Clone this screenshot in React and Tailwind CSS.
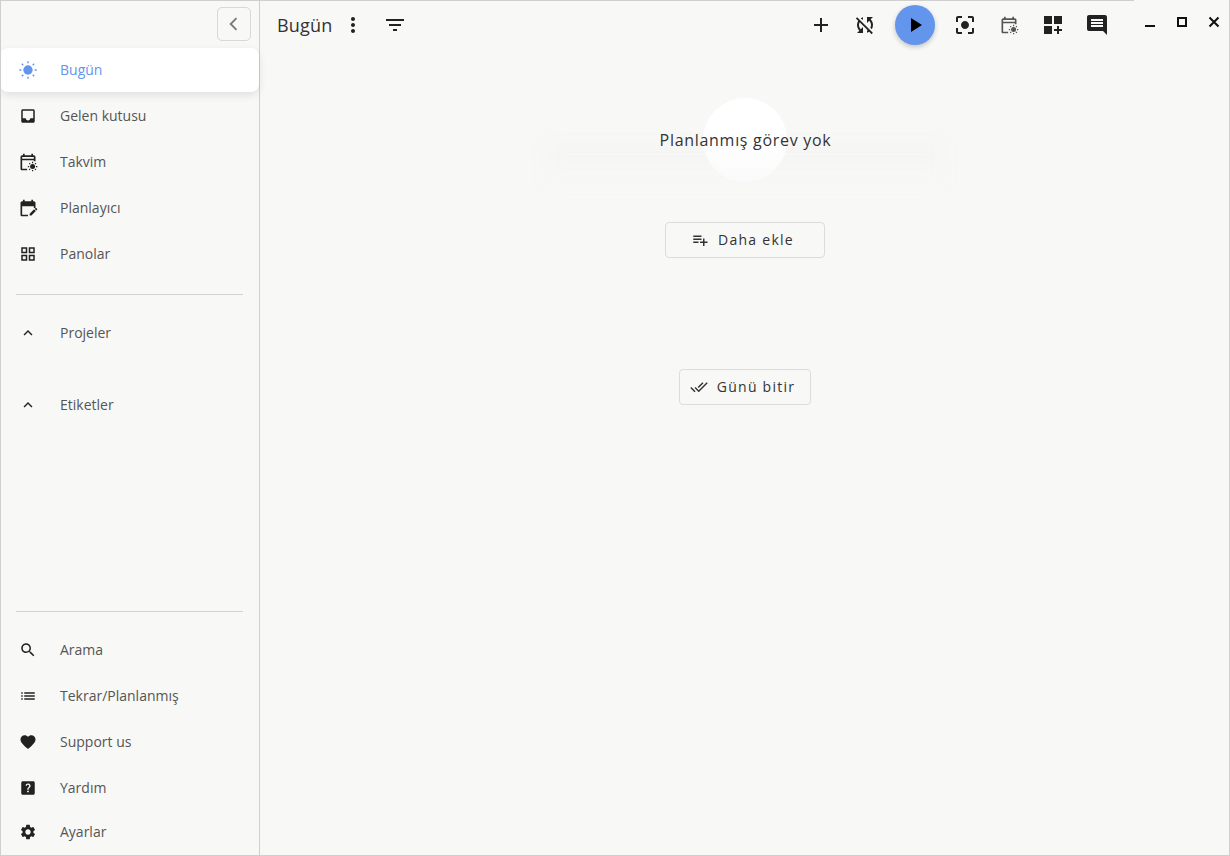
const ICONS = {
  inbox: 'M19 3H4.99c-1.11 0-1.98.89-1.98 2L3 19c0 1.1.88 2 1.99 2H19c1.1 0 2-.9 2-2V5c0-1.11-.9-2-2-2zm0 12h-4c0 1.66-1.35 3-3 3s-3-1.34-3-3H4.99V5H19v10z',
  planner: 'M5 10h14v2h2V6c0-1.1-.9-2-2-2h-1V2h-2v2H8V2H6v2H5c-1.11 0-1.99.9-1.99 2L3 20c0 1.1.89 2 2 2h7v-2H5V10zm17.84 4.28l-.71.71-2.12-2.12.71-.71c.39-.39 1.02-.39 1.41 0l.71.71c.39.39.39 1.02 0 1.41zm-3.54-.7l2.12 2.12L16.12 21H14v-2.12l5.3-5.3z',
  grid: 'M3 3v8h8V3H3zm6 6H5V5h4v4zm-6 4v8h8v-8H3zm6 6H5v-4h4v4zm4-16v8h8V3h-8zm6 6h-4V5h4v4zm-6 4v8h8v-8h-8zm6 6h-4v-4h4v4z',
  expand: 'M12 8l-6 6 1.41 1.41L12 10.83l4.59 4.58L18 14z',
  search: 'M15.5 14h-.79l-.28-.27C15.41 12.59 16 11.11 16 9.5 16 5.91 13.09 3 9.5 3S3 5.91 3 9.5 5.91 16 9.5 16c1.61 0 3.09-.59 4.23-1.57l.27.28v.79l5 4.99L20.49 19l-4.99-5zm-6 0C7.01 14 5 11.99 5 9.5S7.01 5 9.5 5 14 7.01 14 9.5 11.99 14 9.5 14z',
  list: 'M3 13h2v-2H3v2zm0 4h2v-2H3v2zm0-8h2V7H3v2zm4 4h14v-2H7v2zm0 4h14v-2H7v2zM7 7v2h14V7H7z',
  heart: 'M12 21.35l-1.45-1.32C5.4 15.36 2 12.28 2 8.5 2 5.42 4.42 3 7.5 3c1.74 0 3.41.81 4.5 2.09C13.09 3.81 14.76 3 16.5 3 19.58 3 22 5.42 22 8.5c0 3.78-3.4 6.86-8.55 11.54L12 21.35z',
  help: 'M19 3H5c-1.1 0-2 .9-2 2v14c0 1.1.9 2 2 2h14c1.1 0 2-.9 2-2V5c0-1.1-.9-2-2-2zm-6.99 15c-.7 0-1.26-.56-1.26-1.26 0-.71.56-1.25 1.26-1.25.71 0 1.25.54 1.25 1.25-.01.69-.54 1.26-1.25 1.26zm3.01-7.4c-.76 1.11-1.48 1.46-1.87 2.17-.16.29-.22.48-.22 1.41h-1.82c0-.49-.08-1.29.31-1.98.49-.87 1.42-1.39 1.96-2.16.57-.81.25-2.33-1.37-2.33-1.06 0-1.58.8-1.8 1.48l-1.65-.7C9.01 7.15 10.22 6 11.99 6c1.48 0 2.49.67 3.01 1.52.44.72.7 2.07.03 3.08z',
  settings: 'M19.14 12.94c.04-.3.06-.61.06-.94 0-.32-.02-.64-.07-.94l2.03-1.58c.18-.14.23-.41.12-.61l-1.92-3.32c-.12-.22-.37-.29-.59-.22l-2.39.96c-.5-.38-1.03-.7-1.62-.94l-.36-2.54c-.04-.24-.24-.41-.48-.41h-3.84c-.24 0-.43.17-.47.41l-.36 2.54c-.59.24-1.13.57-1.62.94l-2.39-.96c-.22-.08-.47 0-.59.22L2.74 8.87c-.12.21-.08.47.12.61l2.03 1.58c-.05.3-.09.63-.09.94s.02.64.07.94l-2.03 1.58c-.18.14-.23.41-.12.61l1.92 3.32c.12.22.37.29.59.22l2.39-.96c.5.38 1.03.7 1.62.94l.36 2.54c.05.24.24.41.48.41h3.84c.24 0 .44-.17.47-.41l.36-2.54c.59-.24 1.13-.56 1.62-.94l2.39.96c.22.08.47 0 .59-.22l1.92-3.32c.12-.22.07-.47-.12-.61l-2.01-1.58zM12 15.6c-1.98 0-3.6-1.62-3.6-3.6s1.62-3.6 3.6-3.6 3.6 1.62 3.6 3.6-1.62 3.6-3.6 3.6z',
  more: 'M12 8c1.1 0 2-.9 2-2s-.9-2-2-2-2 .9-2 2 .9 2 2 2zm0 2c-1.1 0-2 .9-2 2s.9 2 2 2 2-.9 2-2-.9-2-2-2zm0 6c-1.1 0-2 .9-2 2s.9 2 2 2 2-.9 2-2-.9-2-2-2z',
  filter: 'M10 18h4v-2h-4v2zM3 6v2h18V6H3zm3 7h12v-2H6v2z',
  add: 'M19 13h-6v6h-2v-6H5v-2h6V5h2v6h6v2z',
  syncOff: 'M10 6.35V4.26c-.8.21-1.55.54-2.23.96l1.46 1.46c.25-.12.5-.24.77-.33zm-7.14-.94l2.36 2.36C4.45 8.99 4 10.44 4 12c0 2.21.91 4.2 2.36 5.64L4 20h6v-6l-2.24 2.24C6.68 15.15 6 13.66 6 12c0-1 .25-1.94.68-2.77l8.08 8.08c-.25.13-.5.25-.77.34v2.09c.8-.21 1.55-.54 2.23-.96l2.36 2.36 1.27-1.27L4.14 4.14 2.86 5.41zM20 4h-6v6l2.24-2.24C17.32 8.85 18 10.34 18 12c0 1-.25 1.94-.68 2.77l1.46 1.46C19.55 15.01 20 13.56 20 12c0-2.21-.91-4.2-2.36-5.64L20 4z',
  play: 'M8 5v14l11-7z',
  focus: 'M12 8c-2.21 0-4 1.79-4 4s1.79 4 4 4 4-1.79 4-4-1.79-4-4-4zm-7 7H3v4c0 1.1.9 2 2 2h4v-2H5v-4zM5 5h4V3H5c-1.1 0-2 .9-2 2v4h2V5zm14-2h-4v2h4v4h2V5c0-1.1-.9-2-2-2zm0 16h-4v2h4c1.1 0 2-.9 2-2v-4h-2v4z',
  boardAdd: 'M3 3h8v8H3zm10 0h8v8h-8zM3 13h8v8H3zm15 0h-2v3h-3v2h3v3h2v-3h3v-2h-3z',
  chat: 'M21.99 4c0-1.1-.89-2-1.99-2H4c-1.1 0-2 .9-2 2v12c0 1.1.9 2 2 2h14l4 4-.01-18zM18 14H6v-2h12v2zm0-3H6V9h12v2zm0-3H6V6h12v2z',
  playlistAdd: 'M14 10H3v2h11v-2zm0-4H3v2h11V6zm4 8v-4h-2v4h-4v2h4v4h2v-4h4v-2h-4zM3 16h7v-2H3v2z',
  doneAll: 'M18 7l-1.41-1.41-6.34 6.34 1.41 1.41L18 7zm4.24-1.41L11.66 16.17 7.48 12l-1.41 1.41L11.66 19l12-12-1.42-1.41zM.41 13.41L6 19l1.41-1.41L1.83 12 .41 13.41z',
  calendarSun: 'M19 4h-1V2h-2v2H8V2H6v2H5c-1.1 0-2 .9-2 2v14c0 1.1.9 2 2 2h6v-2H5V10h14v1h2V6c0-1.1-.9-2-2-2zM5 8V6h14v2H5z',
}

const TOP_ITEMS = [
  { icon: 'inbox', label: 'Gelen kutusu' },
  { icon: 'calendarSun', label: 'Takvim', size: 20 },
  { icon: 'planner', label: 'Planlayıcı', size: 20 },
  { icon: 'grid', label: 'Panolar' },
]

const BOTTOM_ITEMS = [
  { icon: 'search', label: 'Arama' },
  { icon: 'list', label: 'Tekrar/Planlanmış' },
  { icon: 'heart', label: 'Support us' },
  { icon: 'help', label: 'Yardım' },
]

function Icon({ name, size = 18 }) {
  return (
    <svg width={size} height={size} viewBox="0 0 24 24" fill="currentColor" className="shrink-0">
      <path d={ICONS[name]} />
      {name === 'calendarSun' && <SunSmall />}
    </svg>
  )
}

function SunSmall() {
  return (
    <g>
      <circle cx="17.5" cy="17.5" r="3" />
      <path
        d="M17.5 11.8v1.6M17.5 21.6v1.6M11.8 17.5h1.6M21.6 17.5h1.6M13.5 13.5l1.1 1.1M20.4 20.4l1.1 1.1M13.5 21.5l1.1-1.1M20.4 14.6l1.1-1.1"
        stroke="currentColor"
        strokeWidth="1.4"
        fill="none"
      />
    </g>
  )
}

function SunIcon() {
  return (
    <svg width="20" height="20" viewBox="0 0 24 24" fill="currentColor" className="shrink-0">
      <circle cx="12" cy="12" r="5.6" />
      <path
        d="M12 1.6v2.4M12 20v2.4M1.6 12H4M20 12h2.4M4.6 4.6l1.7 1.7M17.7 17.7l1.7 1.7M4.6 19.4l1.7-1.7M17.7 6.3l1.7-1.7"
        stroke="currentColor"
        strokeWidth="1.7"
        fill="none"
      />
    </svg>
  )
}

function NavRow({ icon, label, size, className = 'h-[46px]' }) {
  return (
    <div className={`flex shrink-0 items-center text-[14px] text-[#555] ${className}`}>
      <span className="flex w-[54px] justify-center text-[#222]">
        <Icon name={icon} size={size} />
      </span>
      <span className="ml-[5px] pb-[2px]">{label}</span>
    </div>
  )
}

function ToolButton({ icon, size = 24, color = 'text-[#222]' }) {
  return (
    <button className={`flex h-10 w-11 items-center justify-center ${color}`}>
      <Icon name={icon} size={size} />
    </button>
  )
}

function OutlineButton({ icon, label, className }) {
  return (
    <button
      className={`flex h-9 items-center justify-center gap-[9px] rounded border border-[#dcdcdc] pr-[4px] text-[14px] tracking-[1.25px] text-[#333] ${className}`}
    >
      <Icon name={icon} size={18} />
      <span className="pb-[2px]">{label}</span>
    </button>
  )
}

export default function App() {
  return (
    <div className="flex h-screen w-full overflow-hidden border-b border-l border-r border-[#cfcfcf] bg-[#f8f8f7] font-['Open_Sans',sans-serif]">
      <aside className="flex w-[259px] shrink-0 flex-col border-r border-t border-[#cfcfcf]">
        <div className="flex h-[46px] shrink-0 items-center justify-end pr-[8px]">
          <button className="flex h-[34px] w-[34px] items-center justify-center rounded-[5px] border border-[#d8d8d8] text-[#777]">
            <svg width="20" height="20" viewBox="0 0 24 24" fill="none" stroke="currentColor" strokeWidth="2.2">
              <path d="M15 5l-7 7 7 7" />
            </svg>
          </button>
        </div>

        <div className="flex h-[46px] shrink-0 items-center py-px">
          <div className="-ml-px flex h-full w-[259px] items-center rounded-lg bg-white text-[14px] text-[#6495ed] shadow-[0_3px_8px_rgba(0,0,0,0.1)]">
            <span className="flex w-[56px] justify-center">
              <SunIcon />
            </span>
            <span className="ml-[4px] pb-[2px]">Bugün</span>
          </div>
        </div>

        {TOP_ITEMS.map((item) => (
          <NavRow key={item.label} {...item} />
        ))}

        <div className="ml-[15px] mr-[16px] mt-[17px] h-px shrink-0 bg-[#d2d2d2]" />

        <NavRow icon="expand" label="Projeler" className="mt-[15px] h-[46px]" />
        <NavRow icon="expand" label="Etiketler" className="mt-[26px] h-[46px]" />

        <div className="ml-[15px] mr-[16px] mt-auto h-px shrink-0 bg-[#d2d2d2]" />

        <div className="mt-[15px] flex flex-col pb-[2px]">
          {BOTTOM_ITEMS.map((item) => (
            <NavRow key={item.label} {...item} />
          ))}
          <NavRow icon="settings" label="Ayarlar" className="h-[42px]" />
        </div>
      </aside>

      <main className="flex min-w-0 flex-1 flex-col">
        <header className="flex h-[50px] shrink-0 items-center">
          <div className="flex h-full flex-1 items-center border-t border-[#cfcfcf] pb-px pl-[17px] pr-[15px]">
            <span className="text-[18px] tracking-[0.2px] text-[#333]">Bugün</span>
            <span className="ml-[8px] flex text-[#222]">
              <Icon name="more" size={24} />
            </span>
            <span className="ml-[18px] flex text-[#222]">
              <Icon name="filter" size={24} />
            </span>
            <div className="ml-auto flex items-center">
              <ToolButton icon="add" />
              <ToolButton icon="syncOff" />
              <button className="mx-2 flex h-10 w-10 items-center justify-center rounded-full bg-[#6495ed] text-black shadow-[0_2px_5px_rgba(0,0,0,0.22)]">
                <Icon name="play" size={24} />
              </button>
              <ToolButton icon="focus" />
              <ToolButton icon="calendarSun" size={20} color="text-[#555]" />
              <ToolButton icon="boardAdd" />
              <ToolButton icon="chat" />
            </div>
          </div>
          <div className="flex h-full w-[95px] shrink-0 items-start pt-[6px] text-[#111]">
            <span className="flex h-8 w-8 items-center justify-center pl-[1px]">
              <span className="mt-[7px] h-[2px] w-[10px] bg-current" />
            </span>
            <span className="flex h-8 w-8 items-center justify-center">
              <span className="h-[10px] w-[10px] border-2 border-current" />
            </span>
            <span className="flex h-8 w-8 items-center justify-center pl-[1px]">
              <svg width="12" height="12" viewBox="0 0 12 12" stroke="currentColor" strokeWidth="2">
                <path d="M1.5 1.5l9 9M10.5 1.5l-9 9" />
              </svg>
            </span>
          </div>
        </header>

        <section className="flex flex-col items-center pt-[48px]">
          <div className="relative flex h-[84px] w-[172px] items-center justify-center">
            <div className="absolute left-[-115px] top-[46px] h-[40px] w-[402px] bg-[linear-gradient(to_bottom,#f4f4f3,#f8f8f7)] blur-[8px]" />
            <div className="absolute left-[44px] top-0 h-[84px] w-[84px] rounded-full bg-[linear-gradient(to_bottom,#ffffff_50%,#fafafa)]" />
            <span className="relative left-px whitespace-nowrap text-[16px] tracking-[0.7px] text-[#333]">Planlanmış görev yok</span>
          </div>

          <OutlineButton icon="playlistAdd" label="Daha ekle" className="mt-[40px] w-[160px]" />
          <OutlineButton icon="doneAll" label="Günü bitir" className="mt-[111px] w-[132px]" />
        </section>
      </main>
    </div>
  )
}
